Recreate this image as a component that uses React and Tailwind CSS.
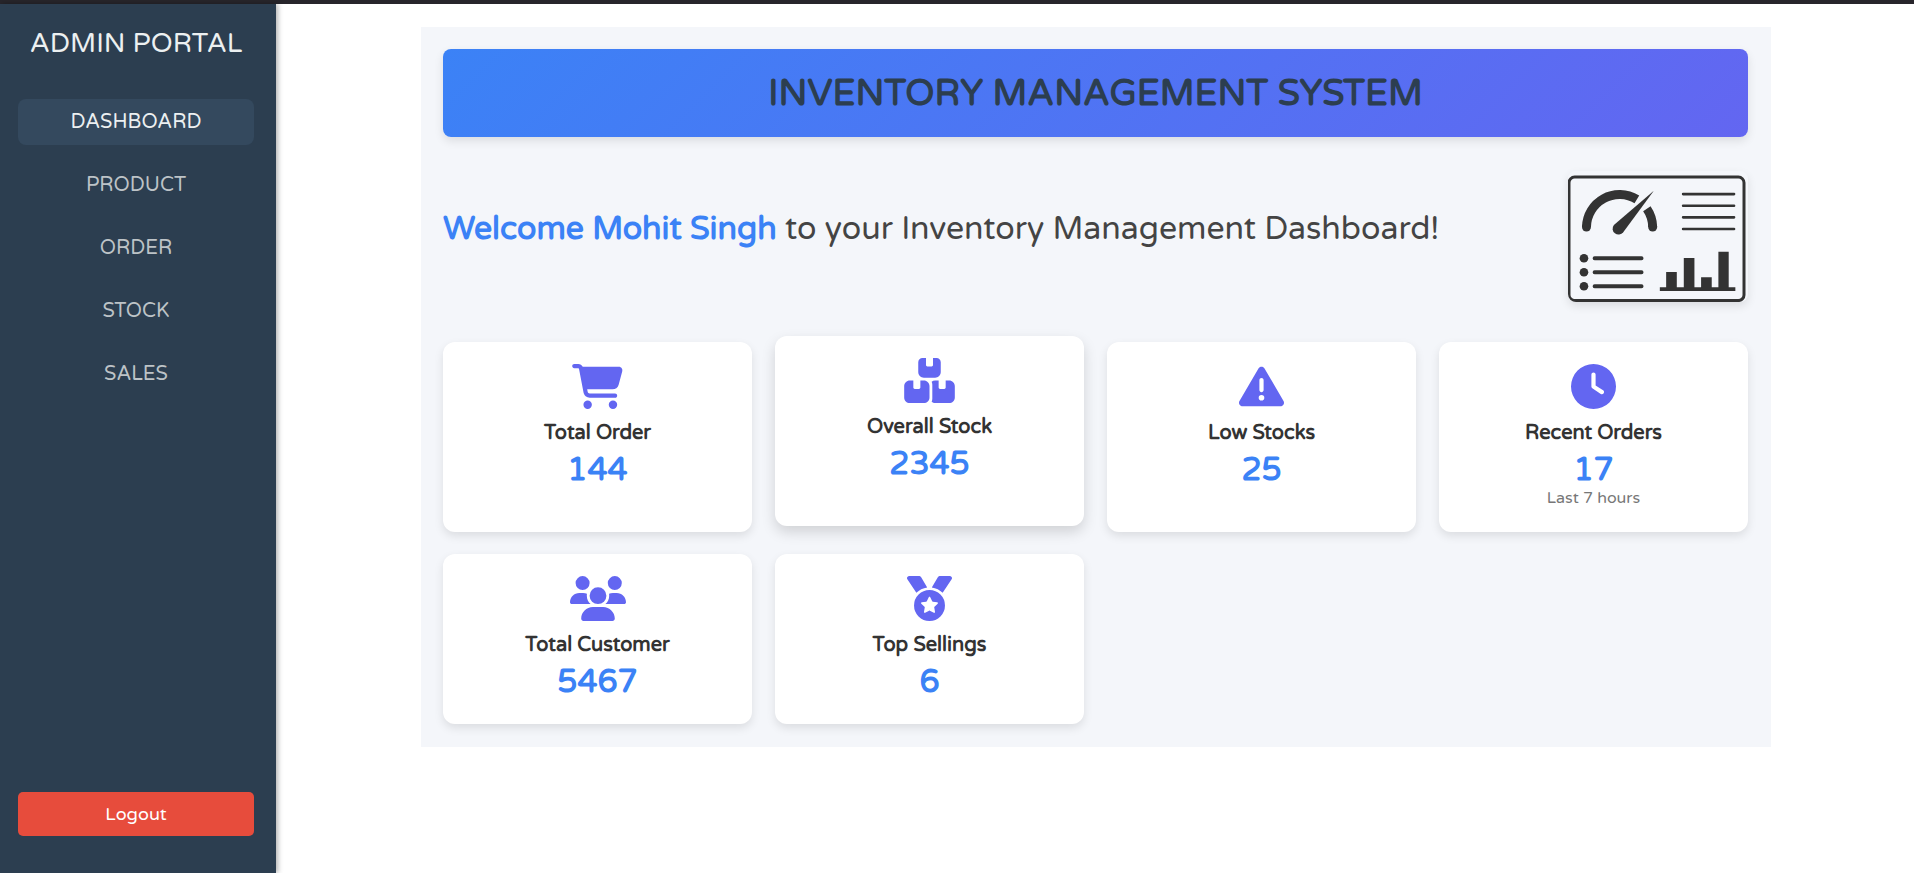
import {
  FaCartShopping,
  FaBoxesStacked,
  FaTriangleExclamation,
  FaClock,
  FaUsers,
  FaMedal,
} from 'react-icons/fa6';
import clsx from 'clsx';

const navItems = ['Dashboard', 'Product', 'Order', 'Stock', 'Sales'];

const stats = [
  { icon: FaCartShopping, iconWidth: 'w-[51px]', label: 'Total Order', value: 144 },
  { icon: FaBoxesStacked, iconWidth: 'w-[51px]', label: 'Overall Stock', value: 2345, raised: true },
  { icon: FaTriangleExclamation, iconWidth: 'w-[45px]', label: 'Low Stocks', value: 25 },
  { icon: FaClock, iconWidth: 'w-[45px]', label: 'Recent Orders', value: 17, note: 'Last 7 hours' },
  { icon: FaUsers, iconWidth: 'w-[56px]', label: 'Total Customer', value: 5467 },
  { icon: FaMedal, iconWidth: 'w-[45px]', label: 'Top Sellings', value: 6 },
];

function Sidebar() {
  return (
    <aside className="z-10 flex w-[276px] shrink-0 flex-col bg-[#2c3e50] pt-5 pr-[22px] pb-[37px] pl-[18px] text-center shadow-[2px_0_5px_rgba(0,0,0,0.3)]">
      <h2 className="text-[27px] leading-10 font-medium whitespace-nowrap text-[#ecf0f1]">ADMIN PORTAL</h2>
      <nav className="mt-[35px] flex flex-col gap-[17px]">
        {navItems.map((item, i) => (
          <a
            key={item}
            href={'#' + item.toLowerCase()}
            aria-current={i === 0 ? 'page' : undefined}
            className={clsx(
              'flex h-[46px] items-center justify-center rounded-lg text-xl uppercase',
              i === 0 ? 'bg-[#34495e] text-[#ecf0f1]' : 'text-[#bdc3c7]'
            )}
          >
            {item}
          </a>
        ))}
      </nav>
      <button type="button" className="mt-auto h-11 rounded-[5px] bg-[#e74c3c] text-lg text-white">
        Logout
      </button>
    </aside>
  );
}

function DashboardArt() {
  return (
    <svg
      role="img"
      aria-label="Dashboard"
      viewBox="84 62 541 393"
      className="h-[131px] w-[180px] shrink-0 rounded-lg shadow-[0_4px_10px_rgba(0,0,0,0.1)]"
      fill="#333"
      stroke="#333"
    >
      <rect x="87" y="80" width="526" height="371" rx="17" fill="none" strokeWidth="9" />
      <g fill="none" strokeWidth="27">
        <path d="M139.500 230A99.500 99.500 0 0 1 291 147" />
        <path d="M321 175A99.500 99.500 0 0 1 338.500 230" />
      </g>
      <g stroke="none">
        <circle cx="139.500" cy="230" r="13.500" />
        <circle cx="338.500" cy="230" r="13.500" />
        <path d="M342 121L222 224A17.500 17.500 0 1 0 250 246Z" />
      </g>
      <path d="M430 131H583M430 166H583M430 201H583M430 236H583" strokeWidth="8" strokeLinecap="round" />
      <path d="M164 324H305M164 366H305M164 408H305" strokeWidth="12" strokeLinecap="round" />
      <g stroke="none">
        <circle cx="132" cy="324" r="13" />
        <circle cx="132" cy="366" r="13" />
        <circle cx="132" cy="408" r="13" />
        <path d="M360 411H379V365H411V411H432V323H464V411H484V381H516V411H536V304H567V411H587V422H360Z" />
      </g>
    </svg>
  );
}

function StatCard({ icon: Icon, iconWidth, label, value, note, raised }) {
  return (
    <article
      className={clsx(
        'flex flex-col items-center rounded-xl bg-white px-[22px] pt-[22px] pb-6 text-center',
        raised ? '-translate-y-1.5 shadow-[0_6px_14px_rgba(0,0,0,0.15)]' : 'shadow-[0_4px_10px_rgba(0,0,0,0.1)]'
      )}
    >
      <Icon className={clsx('mb-[9px] h-[45px] text-[#6366f1]', iconWidth)} aria-hidden="true" />
      <h3 className="text-xl leading-[31px] font-bold text-[#333]">{label}</h3>
      <p className="pt-[3px] text-[32px] leading-9 font-bold text-[#3b82f6]">{value}</p>
      {note && <p className="text-base leading-5 text-[#777]">{note}</p>}
    </article>
  );
}

export default function App() {
  return (
    <div className="flex min-h-screen flex-col bg-white font-['Varela_Round','Noto_Sans',sans-serif]">
      <div className="h-1 bg-[#27252b]" />
      <div className="flex flex-1">
        <Sidebar />
        <main className="min-w-0 flex-1 py-[23px] pl-0.5">
          <div className="mx-auto max-w-[1350px] bg-[#f4f6fa] pt-[22px] pr-[23px] pb-[23px] pl-[22px]">
            <header className="flex h-[88px] items-center justify-center rounded-lg bg-[linear-gradient(135deg,#3b82f6,#6366f1)] pt-0.5 shadow-[0_4px_10px_rgba(0,0,0,0.1)]">
              <h1 className="text-4xl font-bold text-[#2c3e50]">INVENTORY MANAGEMENT SYSTEM</h1>
            </header>
            <section className="mt-[34px] mb-10 flex items-center justify-between">
              <p className="pb-4 text-[32px] text-[#444]">
                <span className="font-bold text-[#3b82f6]">Welcome Mohit Singh</span> to your Inventory Management
                Dashboard!
              </p>
              <DashboardArt />
            </section>
            <section className="grid grid-cols-4 gap-x-[23px] gap-y-[22px]">
              {stats.map((stat) => (
                <StatCard key={stat.label} {...stat} />
              ))}
            </section>
          </div>
        </main>
      </div>
    </div>
  );
}
